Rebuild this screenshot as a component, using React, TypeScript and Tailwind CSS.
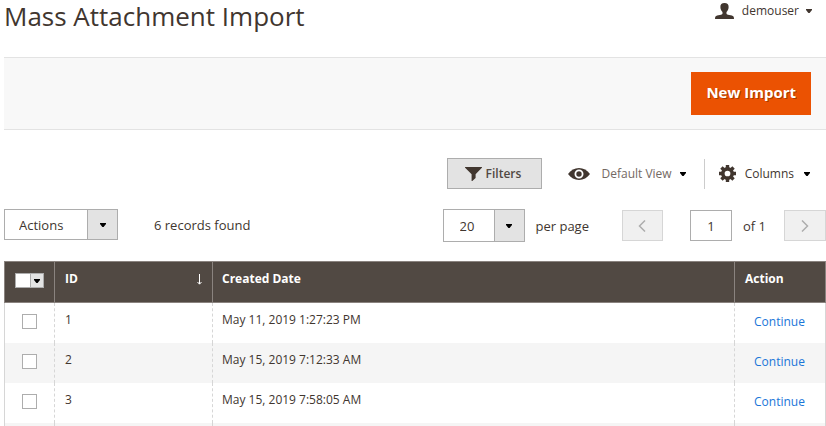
import { useState } from "react";
import clsx from "clsx";

type ImportRecord = {
  id: number;
  createdAt: string;
};

const records: ImportRecord[] = [
  { id: 1, createdAt: "May 11, 2019 1:27:23 PM" },
  { id: 2, createdAt: "May 15, 2019 7:12:33 AM" },
  { id: 3, createdAt: "May 15, 2019 7:58:05 AM" },
];

const Caret = ({ className }: { className?: string }) => (
  <svg viewBox="0 0 6 4" className={clsx("w-[6px] h-1 shrink-0", className)} fill="currentColor" aria-hidden="true">
    <path d="M0 0h6v1L3.6 4H2.4L0 1z" />
  </svg>
);

const UserIcon = () => (
  <svg viewBox="0 0 18 16" preserveAspectRatio="none" className="w-[19px] h-4" fill="#41362f" aria-hidden="true">
    <path d="M9 0C6.300 0 5 1.500 5.100 4c0 1.900.8 3.800 2 4.900v1.700c0 .6-.6.900-1.400 1.100L2 12.600C.6 13 0 13.800 0 16h18c0-2.200-.6-3-2-3.400l-3.700-.9c-.8-.2-1.400-.5-1.400-1.100V8.900c1.200-1.100 2-3 2-4.900C13 1.500 11.700 0 9 0z" />
  </svg>
);

const FunnelIcon = () => (
  <svg viewBox="0 0 17 14" className="w-[17px] h-[14px]" fill="#41362f" aria-hidden="true">
    <path d="M.3 0h16.400c.3 0 .4.400.2.700L10.600 7.300V11L7.300 14h-.7V7.300L.1.700C-.1.400 0 0 .3 0z" />
  </svg>
);

const EyeIcon = () => (
  <svg viewBox="0 0 22 12" className="w-[22px] h-3" aria-hidden="true">
    <path fill="#41362f" d="M0 6C2.800 2.200 6.600 0 11 0s8.200 2.200 11 6c-2.800 3.800-6.600 6-11 6S2.800 9.800 0 6z" />
    <circle cx="11" cy="6" r="3.600" fill="none" stroke="#fff" strokeWidth="1.800" />
    <circle cx="11" cy="6" r="1.700" fill="#41362f" />
  </svg>
);

const GearIcon = () => (
  <svg viewBox="0 0 16 16" className="w-[17px] h-[17px]" aria-hidden="true">
    <g fill="none" stroke="#41362f">
      <circle cx="8" cy="8" r="4.400" strokeWidth="3.400" />
      <path strokeWidth="3.200" d="M8 0v3M8 13v3M0 8h3M13 8h3M2.300 2.300l2.200 2.200M11.500 11.500l2.200 2.200M2.300 13.700l2.200-2.200M11.500 4.500l2.200-2.200" />
    </g>
  </svg>
);

const Chevron = ({ direction }: { direction: "left" | "right" }) => (
  <svg viewBox="0 0 8 12" className="w-2 h-3" fill="none" stroke="#adadad" strokeWidth="1.500" aria-hidden="true">
    <path d={direction === "left" ? "M7 .5L1.500 6 7 11.500" : "M1 .5L6.500 6 1 11.500"} />
  </svg>
);

type SelectBoxProps = {
  label: string;
  options: string[];
  className: string;
  selectClassName: string;
};

const SelectBox = ({ label, options, className, selectClassName }: SelectBoxProps) => (
  <div className={clsx("relative border border-[#adadad] bg-white", className)}>
    <select
      aria-label={label}
      className={clsx("block w-full h-full appearance-none bg-transparent text-[13px] outline-none", selectClassName)}
    >
      {options.map((o) => (
        <option key={o}>{o}</option>
      ))}
    </select>
    <span className="pointer-events-none absolute inset-y-0 right-0 w-[30px] flex items-center justify-center border-l border-[#adadad] bg-[#e3e3e3] text-black">
      <Caret />
    </span>
  </div>
);

const App = () => {
  const [selected, setSelected] = useState<number[]>([]);
  const [page, setPage] = useState("1");

  const allSelected = selected.length === records.length;

  const toggle = (id: number) => {
    setSelected((prev) => (prev.includes(id) ? prev.filter((s) => s !== id) : [...prev, id]));
  };

  return (
    <div className="pl-1 bg-white text-[13px] leading-5 text-[#41362f] font-['Open_Sans',sans-serif]">
      <header className="flex justify-between items-start h-[57px]">
        <h1 className="text-[26px] leading-8">Mass Attachment Import</h1>
        <button className="flex items-center h-[22px] mr-[14px] text-[12px]">
          <UserIcon />
          <span className="ml-2">demouser</span>
          <Caret className="ml-[7px]" />
        </button>
      </header>

      <div className="flex justify-end items-center h-[73px] pr-[15px] border-y border-[#e3e3e3] bg-[#f8f8f8]">
        <button className="h-[43px] px-[15px] pb-[3px] bg-[#eb5202] text-white text-[15px] font-bold [text-shadow:1px_1px_0_rgba(0,0,0,0.3)]">
          New Import
        </button>
      </div>

      <div className="flex justify-end items-center mt-7 h-[31px] pr-4 text-[12px]">
        <button className="flex items-center justify-center gap-1 w-[95px] h-[31px] pr-1 border border-[#adadad] bg-[#e3e3e3] text-[#514943] font-semibold">
          <FunnelIcon />
          Filters
        </button>
        <button className="flex items-center ml-[26px] pr-[18px] text-[#736963]">
          <EyeIcon />
          <span className="ml-[11px]">Default View</span>
          <Caret className="ml-2 text-black" />
        </button>
        <button className="flex items-center h-[30px] border-l border-[#ccc] pl-[14px]">
          <GearIcon />
          <span className="ml-[9px]">Columns</span>
          <Caret className="ml-[10px] text-black" />
        </button>
      </div>

      <div className="flex justify-between items-start mt-5">
        <div className="flex items-center">
          <SelectBox label="Actions" options={["Actions"]} className="w-[114px] h-[31px]" selectClassName="pl-[14px]" />
          <span className="ml-9">6 records found</span>
        </div>
        <div className="flex items-center h-[33px]">
          <SelectBox label="Records" options={["20", "30", "50"]} className="w-[82px] h-[33px]" selectClassName="pl-4" />
          <span className="ml-[11px] mr-[33px]">per page</span>
          <button
            aria-label="Previous page"
            disabled
            className="flex items-center justify-center w-[41px] h-[31px] border border-[#d6d6d6] bg-[#f0f0f0]"
          >
            <Chevron direction="left" />
          </button>
          <input
            aria-label="Page"
            value={page}
            onChange={(e) => setPage(e.target.value)}
            className="w-[42px] h-[31px] ml-[27px] border border-[#adadad] text-center outline-none"
          />
          <span className="ml-[11px] mr-[18px]">of 1</span>
          <button
            aria-label="Next page"
            disabled
            className="flex items-center justify-center w-[42px] h-[31px] border border-[#d6d6d6] bg-[#f0f0f0]"
          >
            <Chevron direction="right" />
          </button>
        </div>
      </div>

      <table className="w-full mt-[19px] table-fixed border-separate border-spacing-0 text-[12px]">
        <colgroup>
          <col className="w-[50px]" />
          <col className="w-[158px]" />
          <col />
          <col className="w-[92px]" />
        </colgroup>
        <thead className="bg-[#514943] text-white">
          <tr className="h-[42px] text-left align-top">
            <th className="border border-r-0 border-[#8a837f] pl-[10px] pt-[11px]">
              <div className="flex w-[29px] h-[15px] border border-[#adadad]">
                <input
                  type="checkbox"
                  aria-label="Select all"
                  checked={allSelected}
                  onChange={() => setSelected(allSelected ? [] : records.map((r) => r.id))}
                  className="w-[14px] h-[13px] appearance-none bg-white checked:bg-[#adadad]"
                />
                <button
                  aria-label="Selection options"
                  className="flex flex-1 items-center justify-center border-l border-[#adadad] bg-[#e3e3e3] text-black"
                >
                  <Caret />
                </button>
              </div>
            </th>
            <th className="border border-r-0 border-[#8a837f] px-[10px] pt-[7px] font-bold">
              <div className="flex items-center justify-between">
                ID
                <svg viewBox="0 0 5 11" className="w-[5px] h-[11px]" fill="none" stroke="currentColor" aria-hidden="true">
                  <path d="M2.500 0v10M.5 8l2 2.200 2-2.200" />
                </svg>
              </div>
            </th>
            <th className="border border-r-0 border-[#8a837f] px-[9px] pt-[7px] font-bold">Created Date</th>
            <th className="border border-[#8a837f] px-[10px] pt-[7px] font-bold">Action</th>
          </tr>
        </thead>
        <tbody>
          {records.map((r) => (
            <tr key={r.id} className="h-10 align-top even:bg-[#f5f5f5]">
              <td className="border-l border-[#d6d6d6] pl-[17px] pt-[11px]">
                <input
                  type="checkbox"
                  aria-label={`Select record ${r.id}`}
                  checked={selected.includes(r.id)}
                  onChange={() => toggle(r.id)}
                  className="block w-[15px] h-[15px] appearance-none border border-[#adadad] bg-white checked:bg-[#adadad]"
                />
              </td>
              <td className="border-l border-dashed border-[#d6d6d6] pl-[10px] pt-[7px]">{r.id}</td>
              <td className="border-l border-dashed border-[#d6d6d6] pl-[9px] pt-[7px]">{r.createdAt}</td>
              <td className="border-l border-r border-[#d6d6d6] [border-left-style:dashed] pl-[19px] pt-[9px]">
                <a href="#continue" className="text-[#1a76d8]">Continue</a>
              </td>
            </tr>
          ))}
          <tr className="h-1 bg-[#f5f5f5]">
            <td className="border-l border-[#d6d6d6]" />
            <td className="border-l border-dashed border-[#d6d6d6]" />
            <td className="border-l border-dashed border-[#d6d6d6]" />
            <td className="border-l border-r border-[#d6d6d6] [border-left-style:dashed]" />
          </tr>
        </tbody>
      </table>
    </div>
  );
};

export default App;
